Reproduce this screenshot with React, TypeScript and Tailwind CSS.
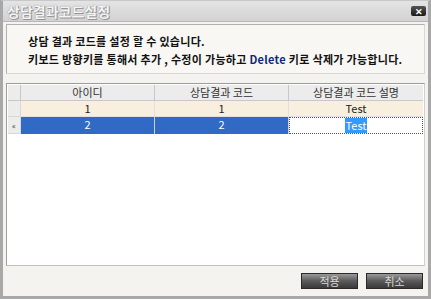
import React from "react";

export default function App() {
  const font = { fontFamily: '"Noto Sans CJK KR", "Noto Sans", sans-serif' };
  return (
    <div className="w-[431px] h-[300px] bg-white" style={font}>
      <div className="w-[431px] h-[299px] flex flex-col bg-[#f4f3ef] border-l-[3px] border-b-[3px] border-r-[3px] border-[#a8a8a8] border-t border-t-[#c8c8c8]">
        {/* Title bar */}
        <div className="h-[20px] flex items-center justify-between bg-gradient-to-b from-[#e4e4e4] to-[#d2d2d2] pl-[4px] pr-[2px]">
          <span className="text-[14px] leading-none font-bold text-[#f4f4f4] [text-shadow:0_0_1px_#777,1px_1px_0_#999] tracking-[0px]">
            상담결과코드설정
          </span>
          <div className="w-[15px] h-[10px] bg-gradient-to-b from-[#555] to-[#1a1a1a] rounded-[2px] flex items-center justify-center text-white text-[9px] font-bold leading-none">
            ✕
          </div>
        </div>
        {/* Body */}
        <div className="flex-1 flex flex-col px-[3px] pt-[2px] pb-[6px] border-t border-[#b8b8b8]">
          <div className="h-[50px] bg-[#f8f7f3] border border-[#b0b0b0] border-b-[#d8d8d8] border-r-[#d8d8d8] flex flex-col justify-center gap-[4px] pl-[21px] pt-[1px] text-[11px] font-bold text-[#111] leading-[14px] tracking-[0.3px]">
            <div>상담 결과 코드를 설정 할 수 있습니다.</div>
            <div>
              키보드 방향키를 통해서 추가 , 수정이 가능하고 <span className="text-[#102a7a]">Delete</span> 키로 삭제가 가능합니다.
            </div>
          </div>
          <div className="mt-[9px] h-[183px] bg-white border border-[#9c9c9c] border-b-[#c8c0b8] border-r-[#d0d0d0] flex flex-col p-[1px]">
            <div className="flex h-[16px] text-[11px] text-[#333] leading-[15px] bg-[#ececec]">
              <div className="w-[13px] border-r border-b border-[#c8c8c8]"></div>
              <div className="w-[134px] border-r border-b border-[#c8c8c8] text-center">아이디</div>
              <div className="w-[134px] border-r border-b border-[#c8c8c8] text-center">상담결과 코드</div>
              <div className="w-[134px] border-b border-[#c8c8c8] text-center">상담결과 코드 설명</div>
            </div>
            <div className="flex h-[16px] text-[11px] leading-[15px] text-[#222]">
              <div className="w-[13px] bg-[#ececec] border-r border-b border-[#d8d8d8]"></div>
              <div className="w-[134px] bg-[#f8efde] border-r border-b border-[#e0e0e0] text-center">1</div>
              <div className="w-[134px] bg-[#f8efde] border-r border-b border-[#e0e0e0] text-center">1</div>
              <div className="w-[134px] bg-[#f8efde] border-b border-[#e0e0e0] text-center">Test</div>
            </div>
            <div className="flex h-[17px] text-[11px] leading-[15px]">
              <div className="w-[13px] bg-[#ececec] border-r border-b border-[#d8d8d8] text-[8px] text-[#333] flex items-center justify-center">«</div>
              <div className="w-[134px] bg-[#316ac5] text-white border-r border-[#d0d0d0] text-center">2</div>
              <div className="w-[134px] bg-[#316ac5] text-white border-r border-[#d0d0d0] text-center">2</div>
              <div className="w-[134px] bg-white border border-dotted border-[#555] flex justify-center">
                <span className="bg-[#3399ff] text-white px-[1px] leading-[14px]">Test</span>
              </div>
            </div>
          </div>
          <div className="flex justify-end gap-[8px] mt-[7px] pr-[2px]">
            <button className="w-[57px] h-[16px] bg-gradient-to-b from-[#9a9a9a] via-[#5a5a5a] to-[#3a3a3a] border border-[#2a2a2a] text-[11px] text-[#d8d8d8] leading-none">
              적용
            </button>
            <button className="w-[57px] h-[16px] bg-gradient-to-b from-[#9a9a9a] via-[#5a5a5a] to-[#3a3a3a] border border-[#2a2a2a] text-[11px] text-[#d8d8d8] leading-none">
              취소
            </button>
          </div>
        </div>
      </div>
    </div>
  );
}
